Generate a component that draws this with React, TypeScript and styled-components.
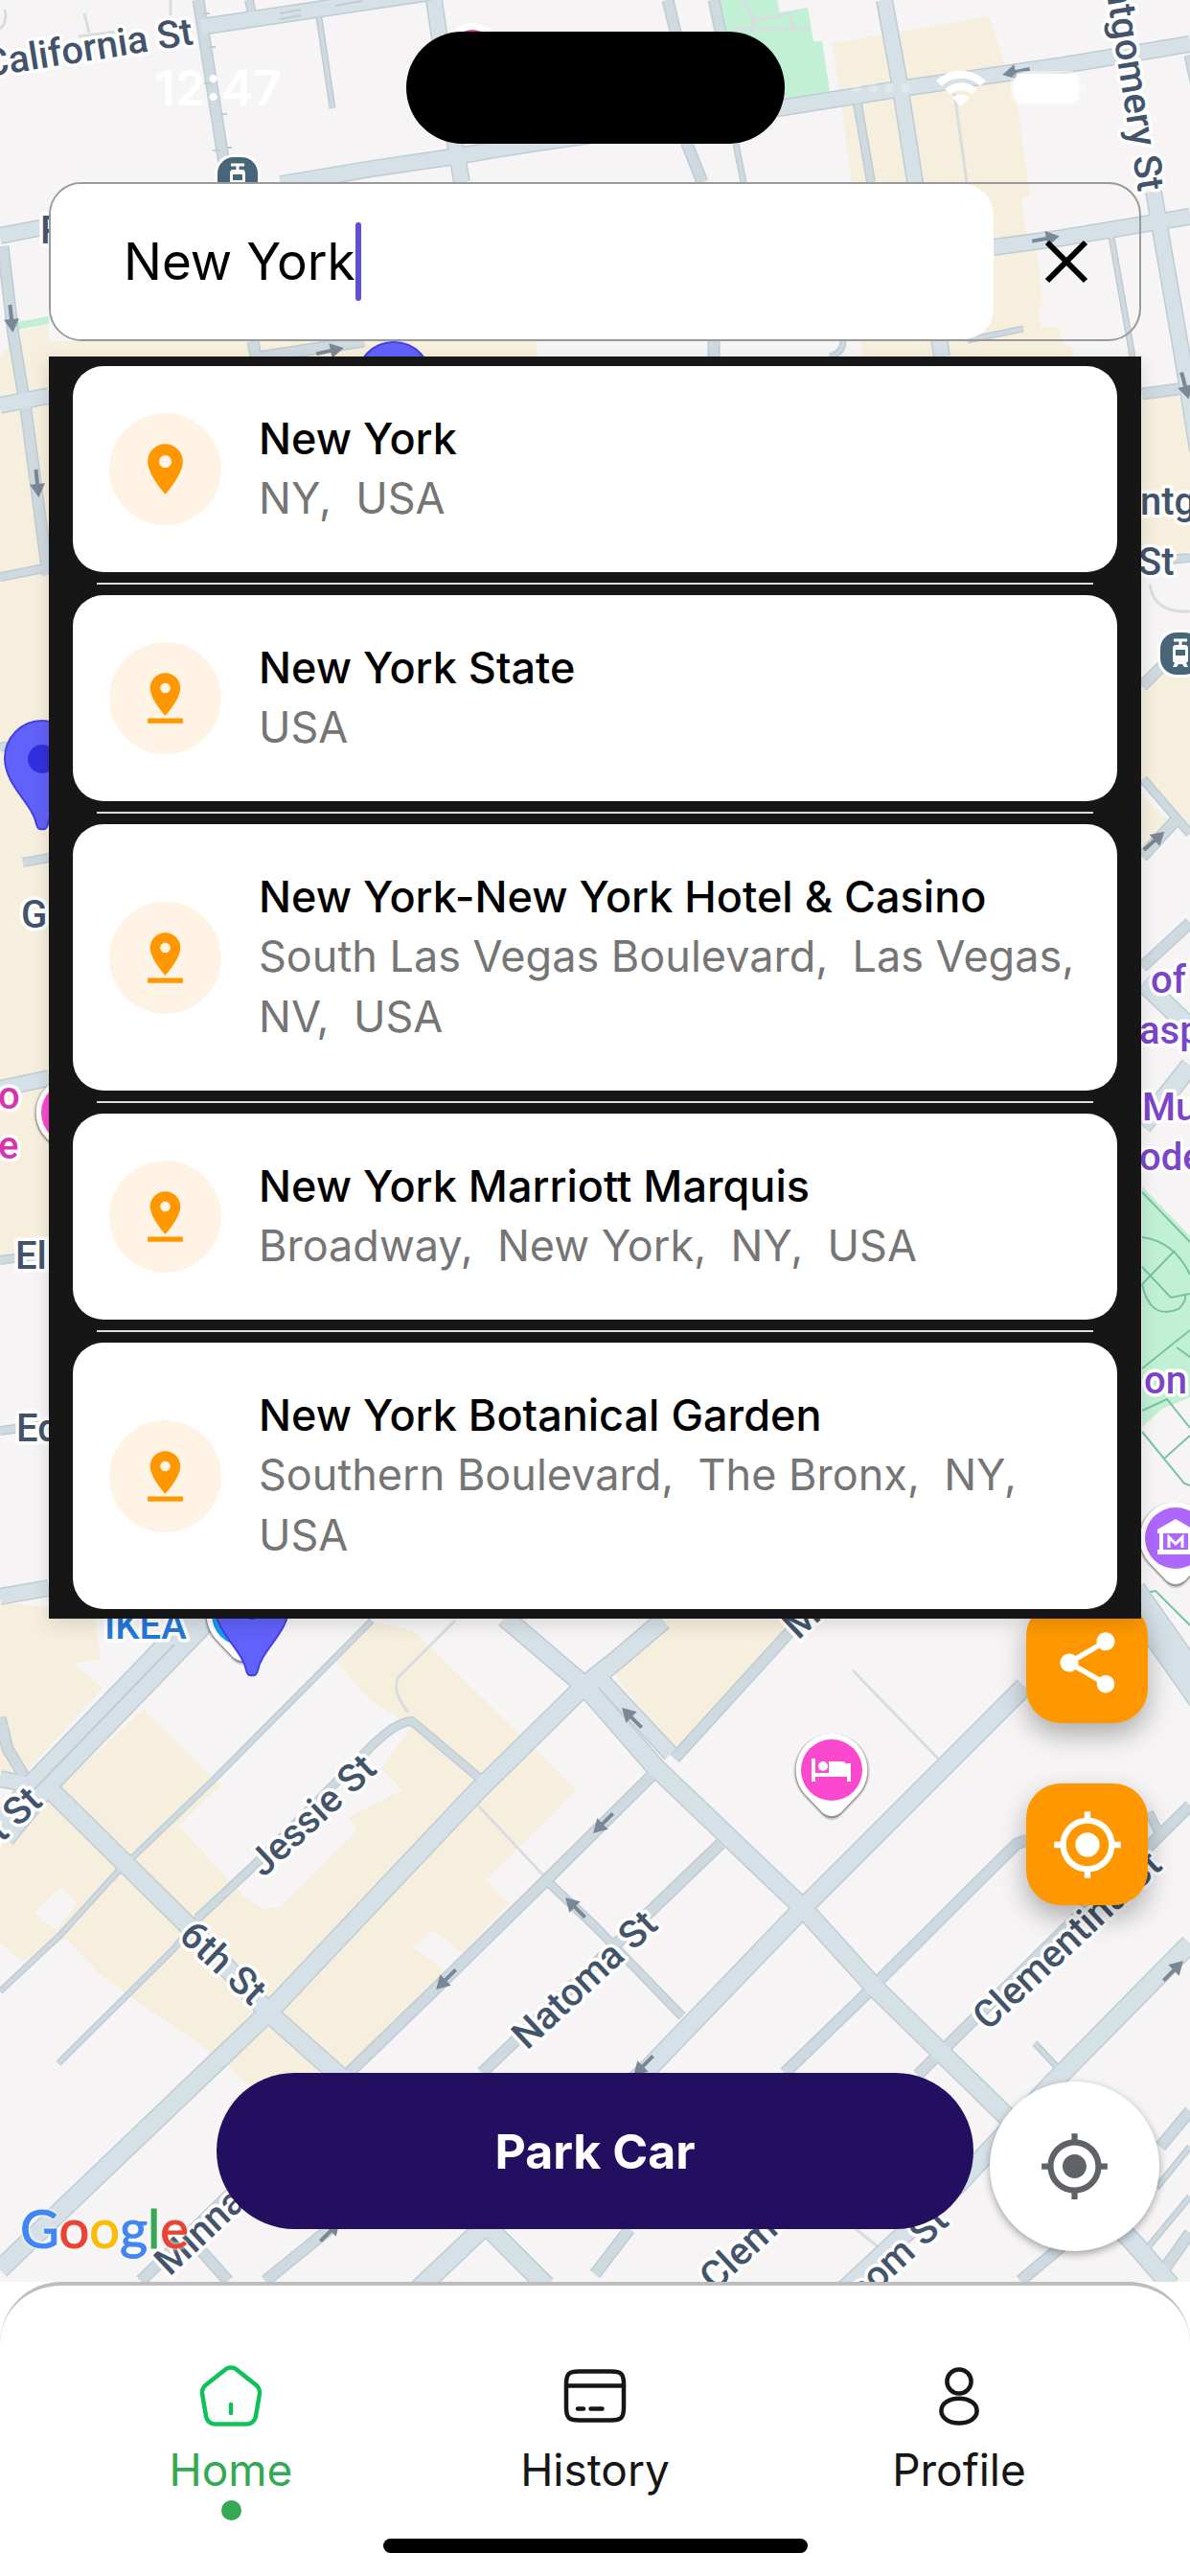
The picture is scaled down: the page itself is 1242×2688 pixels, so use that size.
import React, { useState } from 'react';
import styled, { createGlobalStyle } from 'styled-components';
import { MdLocationOn, MdMyLocation, MdPinDrop, MdShare } from 'react-icons/md';

interface IPlace {
  name: string;
  address: string;
  exact?: boolean;
}

const places: IPlace[] = [
  { name: 'New York', address: 'NY,  USA', exact: true },
  { name: 'New York State', address: 'USA' },
  { name: 'New York-New York Hotel & Casino', address: 'South Las Vegas Boulevard,  Las Vegas,  NV,  USA' },
  { name: 'New York Marriott Marquis', address: 'Broadway,  New York,  NY,  USA' },
  { name: 'New York Botanical Garden', address: 'Southern Boulevard,  The Bronx,  NY,  USA' },
];

export default function App() {
  const [query, setQuery] = useState('New York');

  return (
    <Screen>
      <GlobalStyle />
      <MapArea>
        <CityMap />
        <StatusBar />
        <SearchBox>
          <SearchField>
            <SearchInput aria-label='Search location' value={query} onChange={(e) => setQuery(e.target.value)} />
            <Caret />
          </SearchField>
          <ClearButton aria-label='Clear' onClick={() => setQuery('')}>
            <svg width='48' height='48' viewBox='0 0 48 48' stroke='#000' strokeWidth='6'>
              <path d='M4 4 44 44M44 4 4 44' />
            </svg>
          </ClearButton>
        </SearchBox>
        <Results>
          {places.map((place, i) => (
            <li key={place.name}>
              {i > 0 && <Divider />}
              <PlaceCard place={place} />
            </li>
          ))}
        </Results>
        <FabStack>
          <Fab aria-label='Share'>
            <MdShare />
          </Fab>
          <Fab aria-label='Find my car'>
            <MdMyLocation />
          </Fab>
        </FabStack>
        <GoogleMark />
        <ParkButton>Park Car</ParkButton>
        <LocateButton aria-label='My location'>
          <MdMyLocation />
        </LocateButton>
      </MapArea>
      <BottomNav />
    </Screen>
  );
}

function StatusBar() {
  return (
    <StatusRow>
      <Clock>12:47</Clock>
      <Island />
      <StatusIcons>
        <svg width='64' height='12' viewBox='0 0 64 12' fill='#fff' opacity='0.25'>
          <circle cx='6' cy='6' r='5' />
          <circle cx='23' cy='6' r='5' />
          <circle cx='40' cy='6' r='5' />
          <circle cx='57' cy='6' r='5' />
        </svg>
        <svg width='54' height='38' viewBox='0 0 54 38' fill='none' stroke='#fff' strokeWidth='8'>
          <path d='M4 14a33 33 0 0 1 46 0' />
          <path d='M13 23a20 20 0 0 1 28 0' />
          <path d='M27 38 18 29a13 13 0 0 1 18 0z' fill='#fff' stroke='none' />
        </svg>
        <svg width='80' height='38' viewBox='0 0 80 38' fill='#fff'>
          <rect x='1' y='1' width='74' height='36' rx='12' opacity='0.4' />
          <rect x='4' y='4' width='68' height='30' rx='9' />
          <path d='M76 13c5 2 5 10 0 12z' opacity='0.4' />
        </svg>
      </StatusIcons>
    </StatusRow>
  );
}

function PlaceCard({ place }: { place: IPlace }) {
  return (
    <CardButton>
      <CardIcon>{place.exact ? <MdLocationOn /> : <MdPinDrop />}</CardIcon>
      <CardText>
        <PlaceName>{place.name}</PlaceName>
        <PlaceAddress>{place.address}</PlaceAddress>
      </CardText>
    </CardButton>
  );
}

function BottomNav() {
  return (
    <Footer>
      <NavRow>
        <NavLink href='#home' $active>
          <svg viewBox='0 0 24 24'>
            <path d='M12 18v-3' />
            <path d='M10.07 2.82 3.14 8.37c-.78.62-1.28 1.93-1.11 2.91l1.33 7.96c.24 1.42 1.6 2.57 3.04 2.57h11.2c1.43 0 2.8-1.16 3.04-2.57l1.33-7.96c.16-.98-.34-2.29-1.11-2.91l-6.93-5.54c-1.07-.86-2.8-.86-3.86-.01z' />
          </svg>
          Home
          <ActiveDot />
        </NavLink>
        <NavLink href='#history'>
          <svg viewBox='0 0 24 24'>
            <path d='M2 8.5h20M6 16.5h2M10.5 16.5h4' />
            <path d='M6.44 3.5h11.11c3.56 0 4.45.88 4.45 4.39v8.2c0 3.51-.89 4.39-4.44 4.39H6.44c-3.55.01-4.44-.87-4.44-4.38v-8.21c0-3.51.89-4.39 4.44-4.39z' />
          </svg>
          History
        </NavLink>
        <NavLink href='#profile'>
          <svg viewBox='0 0 24 24'>
            <circle cx='12' cy='7' r='4.2' />
            <path d='M12 12.9c3.6 0 6.2 1.9 6.2 4.3 0 2.5-2.6 4.3-6.2 4.3s-6.2-1.8-6.2-4.3c0-2.4 2.6-4.3 6.2-4.3z' />
          </svg>
          Profile
        </NavLink>
      </NavRow>
      <HomeIndicator />
    </Footer>
  );
}

function GoogleMark() {
  return (
    <Brand>
      <Letter $color='#4285f4'>G</Letter>
      <Letter $color='#ea4335'>o</Letter>
      <Letter $color='#fbbc05'>o</Letter>
      <Letter $color='#4285f4'>g</Letter>
      <Letter $color='#34a853'>l</Letter>
      <Letter $color='#ea4335'>e</Letter>
    </Brand>
  );
}

// street lines grouped by width, drawn twice: casing first, fill on top
const roads: { w: number; d: string }[] = [
  { w: 6, d: 'M333 18 347 113M768 150 776 190M1160 247 1182 372M0 2078 63 2019 123 1953 222 1858 388 1691M61 2153 182 2033 206 2002M1207 2283 1242 2240M1199 2344 1242 2292M1080 2132 1106 2160M1010 355 1068 343M1239 58 1246 90M866 372Q880 368 880 356' },
  { w: 9, d: 'M24 900 51 895M0 602 51 592M0 780 8 778M895 108 909 190M1199 1891 1211 1915M570 1962 621 2010 712 2104M0 1315 51 1308M0 1493 51 1486M1220 584 1242 582M1193 813 1242 870M206 2002 269 1943 380 1830Q412 1796 430 1796L501 1856M260 0 263 14' },
  { w: 12, d: 'M207 0 237 190M697 0 705 33 717 150 733 190M745 0 752 33M745 356V372M264 356 267 372M262 374 380 356M3 257 14 350 27 427 50 600M1192 411 1230 406M1192 716 1218 690M1192 894 1227 856M1192 1009 1242 963M0 1792 8 1825 25 1853M362 2165 459 2071 570 1962 684 1849M503 2163 752 1924M704 1835 835 1691M819 2163 910 2075M918 2066 1061 1924 1072 1920M958 2165 1242 1884M1211 2240 1242 2203M1215 2368 1242 2330M1065 2380 1108 2344M621 2373 657 2326M277 2380 345 2325M147 2380 260 2270M206 2344 238 2380' },
  { w: 17, d: 'M453 0 475 150 482 190M0 246 51 236M210 28 450 -8M293 192 388 176 470 164 555 150 819 112 950 91 1110 68 1242 46M923 0 939 87 955 190 983 372M1037 258 1110 248 1242 226M1204 200 1234 372 1250 470M0 423 51 413M0 1136 51 1125M0 1666 51 1657M0 1856 30 1862M629 1754 700 1830' },
  { w: 20, d: 'M50 1865 194 2007 281 2101 352 2164 507 2322 570 2385M435 2390 507 2322 680 2155 837 1992 1069 1760M0 2368 79 2292 281 2099 499 1868 610 1759 645 1731 692 1691M527 1688 610 1759 684 1844 837 1990 914 2075 1049 2207 1183 2340 1222 2385M870 2400 1001 2278 1100 2172 1242 2028M1193 1025 1242 1072M1242 1112 1192 1175' },
  { w: 34, d: 'M0 1914 42 1862 215 1683M1180 1662 1260 1776' },
];

const arrows: [number, number, number][] = [
  [12, 333, 84], [39, 505, 84], [345, 366, -12], [1092, 249, -10], [1237, 403, 75], [1205, 877, -42],
  [465, 2066, 135], [629, 1903, 135], [600, 1990, -135], [659, 1792, -135], [671, 2156, 135], [1225, 2056, -45],
  [345, 2328, -45], [1060, 75, 168],
];

function CityMap() {
  return (
    <MapSvg viewBox='0 0 1242 2381' preserveAspectRatio='xMidYMid slice' aria-hidden='true'>
      <rect width='1242' height='2381' fill='#f6f4f5' />
      <g fill='#f7efdd'>
        <path d='M869 45 1032 17 1048 65 1062 110 1075 204 1066 207 1071 245 1081 248 1088 317 1084 322 1087 341 1105 341 1110 360 1119 362V372H900L889 190z' />
        <path d='M0 372 22 346 51 338V356H560V372H51V1310L0 1318z' />
        <path d='M1192 412 1230 412 1242 470V575L1192 590zM1192 712 1242 690V862L1192 820zM1192 830 1220 856 1192 885z' />
        <path d='M0 1672 98 1682 105 1731 77 1736 107 1761 24 1853 0 1849z' />
        <path d='M150 1783 230 1863 186 1905 257 1981 275 1992 293 1990 372 1910 364 1896 420 1868 398 1846 430 1800 388 1776 349 1731 388 1691 432 1702 602 1868 507 1962 531 1986 483 2038 451 2014 432 2033 471 2061 362 2165 257 2175 232 2150 100 2058 66 1995 62 1865z' />
        <path d='M0 1915 51 1882 281 2090 240 2125 125 2047 107 2061 69 2023 24 2047 0 2028z' />
        <path d='M641 1747 688 1691H830L704 1828z' />
      </g>
      <path d='M36 1997 63 1969 81 1986 59 2014z' fill='#f6f4f5' />
      <g fill='#c2f0d4'>
        <path d='M749 0H811L814 13 843 8 849 43 858 43 866 95 819 106 760 60z' />
        <path d='M18 336 51 330V338L18 344z' />
        <path d='M1192 1238 1242 1290V1458L1213 1470 1192 1489z' />
      </g>
      <g fill='none' stroke='#d9dde0' strokeWidth='3'>
        <path d='M774 0 786 18 785 32M766 30H846M786 21 824 14 830 32' />
        <path d='M996 97 1009 190M475 1691 416 1750Q408 1764 426 1787M499 1884 570 1960M890 1743 981 1837M893 2326 916 2344M1200 610Q1204 640 1242 638M88 14 93 34M178 0V16M82 38 130 32M0 30Q8 24 5 10' />
      </g>
      <g fill='none' stroke='#77c3a4' strokeWidth='2'>
        <path d='M1192 1244 1242 1296M1192 1291Q1225 1295 1242 1330M1192 1322 1222 1354 1242 1350M1192 1340 1226 1305M1192 1340Q1200 1378 1230 1366 1240 1356 1236 1350M1192 1428 1242 1388M1228 1406 1242 1416M1192 1472 1218 1460 1242 1490M1192 1494 1236 1548 1242 1550M1215 1522 1242 1498M1192 1663 1206 1660 1242 1696' />
      </g>
      <g fill='none' strokeLinejoin='round'>
        {roads.map((r) => (
          <path key={r.w} d={r.d} stroke='#bfccd4' strokeWidth={r.w + 1} />
        ))}
        {roads.map((r) => (
          <path key={r.w} d={r.d} stroke={r.w < 15 ? '#ced9e0' : '#d6e0e7'} strokeWidth={r.w - 2} />
        ))}
        <path d='M35 1868 182 1716' stroke='#bfccd4' strokeWidth='2' />
        <path d='M212 14h7M213 87h7M218 49h7M230 119h7M222 157h7M236 154h6M292 14 314 10M292 20 314 16M350 6 378 1' stroke='#bfccd4' strokeWidth='2' />
      </g>
      <g fill='none' stroke='#7a8794' strokeWidth='4'>
        {arrows.map(([x, y, a]) => (
          <g key={`${x}-${y}`} transform={`translate(${x} ${y}) rotate(${a})`}>
            <path d='M-15 0H2' />
            <path d='M0-8 14 0 0 8z' fill='#7a8794' stroke='none' />
          </g>
        ))}
      </g>
      <g fontFamily='Roboto, "Liberation Sans", sans-serif' fontSize='40' fontWeight='500' fill='#43546a' stroke='#fff' strokeWidth='7' strokeLinejoin='round' paintOrder='stroke'>
        <text transform='translate(203 46) rotate(-9)' textAnchor='end'>California St</text>
        <text transform='translate(1188 201) rotate(81)' textAnchor='end'>Montgomery St</text>
        <text x='42' y='254'>P</text>
        <text x='22' y='968'>G</text>
        <text x='16' y='1324'>Ell</text>
        <text x='17' y='1504'>Ed</text>
        <text x='1190' y='537'>ntg</text>
        <text x='1188' y='600'>St</text>
        <text transform='translate(46 1882) rotate(-43)' textAnchor='end'>Market St</text>
        <text transform='translate(275 1960) rotate(-43)'>Jessie St</text>
        <text transform='translate(185 2022) rotate(43)'>6th St</text>
        <text transform='translate(550 2140) rotate(-43)'>Natoma St</text>
        <text transform='translate(1031 2120) rotate(-43)'>Clementina St</text>
        <text transform='translate(177 2376) rotate(-43)'>Minna St</text>
        <text transform='translate(746 2392) rotate(-43)'>Clementina St</text>
        <text transform='translate(992 2320) rotate(-43)' textAnchor='end'>Folsom St</text>
        <text transform='translate(833 1712) rotate(-43)'>Mi</text>
        <text x='109' y='1710' fill='#2577d8'>IKEA</text>
        <g fill='#d835ac'>
          <text x='-2' y='1157'>o</text>
          <text x='-2' y='1209'>e</text>
        </g>
        <g fill='#7a45c9'>
          <text x='1201' y='1036'>of</text>
          <text x='1189' y='1089'>asp</text>
          <text x='1192' y='1169'>Mu</text>
          <text x='1189' y='1221'>ode</text>
          <text x='1194' y='1454'>on</text>
        </g>
      </g>
      <circle cx='493' cy='52' r='28' fill='#fff' />
      <circle cx='493' cy='52' r='21' fill='#e0359f' />
      <Transit x={248} y={186} />
      <Transit x={1232} y={682} />
      <Poi x={75} y={1161} color='#fb49cf' />
      <Poi x={253} y={1685} color='#189cf0' />
      <Poi x={868} y={1847} color='#fb49cf'>
        <path d='M-19-12V12M-19 5H18M18 12V-7' stroke='#fff' strokeWidth='4' />
        <path d='M-3 3V-9H10Q17-9 17 0V3z' fill='#fff' />
        <circle cx='-9' cy='-4' r='5' fill='#fff' />
      </Poi>
      <Poi x={1227} y={1605} color='#ad67fb'>
        <path d='M0-20 19-9V-5H-19V-9zM-17-5H-13V12H-17zM13-5H17V12H13zM-19 12H19V17H-19z' fill='#fff' />
        <path d='M-7 10V-1L0 6 7-1V10' fill='none' stroke='#fff' strokeWidth='3' />
      </Poi>
      <CarPin x={411} y={471} />
      <CarPin x={44} y={866} />
      <CarPin x={263} y={1749} />
    </MapSvg>
  );
}

function Poi({ x, y, color, children }: { x: number; y: number; color: string; children?: React.ReactNode }) {
  return (
    <g transform={`translate(${x} ${y})`}>
      <path d='M0-38A39 39 0 0 1 29 28L10 48Q0 57-10 48L-29 28A39 39 0 0 1 0-38z' fill='#000' opacity='0.12' />
      <path d='M0-37A38 38 0 0 1 28 27L10 46Q0 55-10 46L-28 27A38 38 0 0 1 0-37z' fill='#000' opacity='0.3' />
      <path d='M0-38A38 38 0 0 1 28 25L10 44Q0 52-10 44L-28 25A38 38 0 0 1 0-38z' fill='#fff' />
      <circle r='32' fill={color} />
      {children}
    </g>
  );
}

function Transit({ x, y }: { x: number; y: number }) {
  return (
    <g transform={`translate(${x} ${y})`}>
      <rect x='-24' y='-25' width='48' height='50' rx='20' fill='#fff' />
      <rect x='-21' y='-22' width='42' height='44' rx='17' fill='#48667a' />
      <path d='M-7-14H7M0-14V-8' stroke='#fff' strokeWidth='3' />
      <path fillRule='evenodd' d='M-5-9H5Q8-9 8-5V8L6 10 8 14H4L2 11H-2L-4 14H-8L-6 10-8 8V-5Q-8-9-5-9zM-5-4V2H5V-4z' fill='#fff' />
    </g>
  );
}

function CarPin({ x, y }: { x: number; y: number }) {
  return (
    <g transform={`translate(${x} ${y})`}>
      <path d='M0-1C-3 0-5-2-6-6-10-28-39-46-39-75A39 39 0 0 1 39-75C39-46 10-28 6-6 5-2 3 0 0-1z' fill='#6161fb' stroke='#4540e0' strokeWidth='2' />
      <circle cy='-74' r='15' fill='#322fe0' />
    </g>
  );
}

const GlobalStyle = createGlobalStyle`
  * {
    box-sizing: border-box;
  }
  body {
    margin: 0;
    background: #fff;
    font-family: Inter, 'Liberation Sans', sans-serif;
  }
  button {
    font-family: inherit;
    border: none;
    cursor: pointer;
  }
`;

const Screen = styled.div`
  display: flex;
  flex-direction: column;
  min-height: 100vh;
`;

const MapArea = styled.main`
  position: relative;
  flex: 1;
  overflow: hidden;
`;

const MapSvg = styled.svg`
  position: absolute;
  inset: 0;
  width: 100%;
  height: 100%;
`;

const StatusRow = styled.div`
  position: relative;
  display: grid;
  grid-template-columns: 1fr auto 1fr;
  align-items: center;
  padding: 33px 0 40px;
`;

const Clock = styled.span`
  padding-left: 32px;
  font-size: 51px;
  font-weight: 600;
  color: #fff;
  text-align: center;
`;

const Island = styled.div`
  width: 395px;
  height: 117px;
  border-radius: 60px;
  background: #000;
`;

const StatusIcons = styled.div`
  display: flex;
  justify-content: flex-end;
  align-items: center;
  gap: 24px;
  padding-right: 108px;
`;

const SearchBox = styled.div`
  position: relative;
  display: flex;
  height: 166px;
  margin: 0 51px;
  border: 2px solid #999;
  border-radius: 34px;
`;

const SearchField = styled.div`
  display: flex;
  flex: 1;
  align-items: center;
  padding-left: 76px;
  border-radius: 32px;
  background: #fff;
`;

const SearchInput = styled.input`
  field-sizing: content;
  padding: 0;
  border: none;
  outline: none;
  background: none;
  font-family: inherit;
  font-size: 53px;
  color: #000;
`;

const Caret = styled.span`
  width: 6px;
  height: 82px;
  border-radius: 3px;
  background: #5f4fdc;
`;

const ClearButton = styled.button`
  display: flex;
  justify-content: center;
  align-items: center;
  width: 152px;
  background: none;
`;

const Results = styled.ul`
  position: relative;
  z-index: 1;
  margin: 16px 51px 0;
  padding: 10px 25px;
  list-style: none;
  background: #161616;
  box-shadow: 0 6px 18px rgba(0, 0, 0, 0.12);
`;

const Divider = styled.hr`
  height: 2px;
  margin: 11px 25px;
  border: none;
  background: #ddd;
`;

const CardButton = styled.button`
  display: flex;
  align-items: center;
  gap: 39px;
  width: 100%;
  padding: 46px 32px 46px 38px;
  border-radius: 32px;
  background: #fff;
  text-align: left;
`;

const CardIcon = styled.span`
  display: flex;
  flex-shrink: 0;
  justify-content: center;
  align-items: center;
  width: 117px;
  height: 117px;
  border-radius: 50%;
  background: #fff3e5;
  font-size: 63px;
  color: #ff9800;
`;

const CardText = styled.span`
  display: flex;
  flex-direction: column;
`;

const PlaceName = styled.span`
  font-size: 45px;
  font-weight: 500;
  line-height: 60px;
  color: #000;
`;

const PlaceAddress = styled.span`
  font-size: 45px;
  line-height: 63px;
  color: #757575;
  white-space: pre-wrap;
`;

const FabStack = styled.div`
  position: absolute;
  right: 44px;
  bottom: 393px;
  display: flex;
  flex-direction: column;
  gap: 63px;
`;

const Fab = styled.button`
  display: flex;
  justify-content: center;
  align-items: center;
  width: 127px;
  height: 127px;
  border-radius: 36px;
  background: #ff9800;
  box-shadow: 0 12px 28px rgba(0, 0, 0, 0.3);
  font-size: 76px;
  color: #fff;
`;

const Brand = styled.span`
  position: absolute;
  left: 21px;
  bottom: 24px;
  font-family: Lato, sans-serif;
  font-size: 56px;
  line-height: 64px;
  text-shadow: 0 0 4px #fff, 0 0 4px #fff;
`;

const Letter = styled.span<{ $color: string }>`
  color: ${({ $color }) => $color};
  -webkit-text-stroke: 1px ${({ $color }) => $color};
`;

const ParkButton = styled.button`
  position: absolute;
  left: 226px;
  right: 226px;
  bottom: 55px;
  height: 163px;
  border-radius: 82px;
  background: #220f5f;
  font-size: 50px;
  font-weight: 700;
  color: #fff;
`;

const LocateButton = styled.button`
  position: absolute;
  right: 32px;
  bottom: 32px;
  display: flex;
  justify-content: center;
  align-items: center;
  width: 177px;
  height: 177px;
  border-radius: 50%;
  background: #fff;
  box-shadow: 0 3px 8px rgba(0, 0, 0, 0.35);
  font-size: 75px;
  color: #5f6368;
`;

const Footer = styled.footer`
  padding: 79px 51px 24px;
  border-top: 4px solid #bdbdbd;
  border-radius: 64px 64px 0 0;
  background: #fff;
`;

const NavRow = styled.nav`
  display: grid;
  grid-template-columns: repeat(3, 1fr);
  height: 166px;
`;

const NavLink = styled.a<{ $active?: boolean }>`
  display: flex;
  flex-direction: column;
  align-items: center;
  font-size: 46px;
  line-height: 60px;
  text-decoration: none;
  color: ${({ $active }) => ($active ? '#34a853' : '#161616')};
  > svg {
    width: 72px;
    height: 72px;
    margin-bottom: 11px;
    fill: none;
    stroke: ${({ $active }) => ($active ? '#0fc15b' : '#161616')};
    stroke-width: 1.5;
    stroke-linecap: round;
    stroke-linejoin: round;
  }
`;

const ActiveDot = styled.span`
  width: 21px;
  height: 21px;
  margin-top: 2px;
  border-radius: 50%;
  background: #34a853;
`;

const HomeIndicator = styled.div`
  width: 443px;
  height: 15px;
  margin: 19px auto 0;
  border-radius: 8px;
  background: #000;
`;
